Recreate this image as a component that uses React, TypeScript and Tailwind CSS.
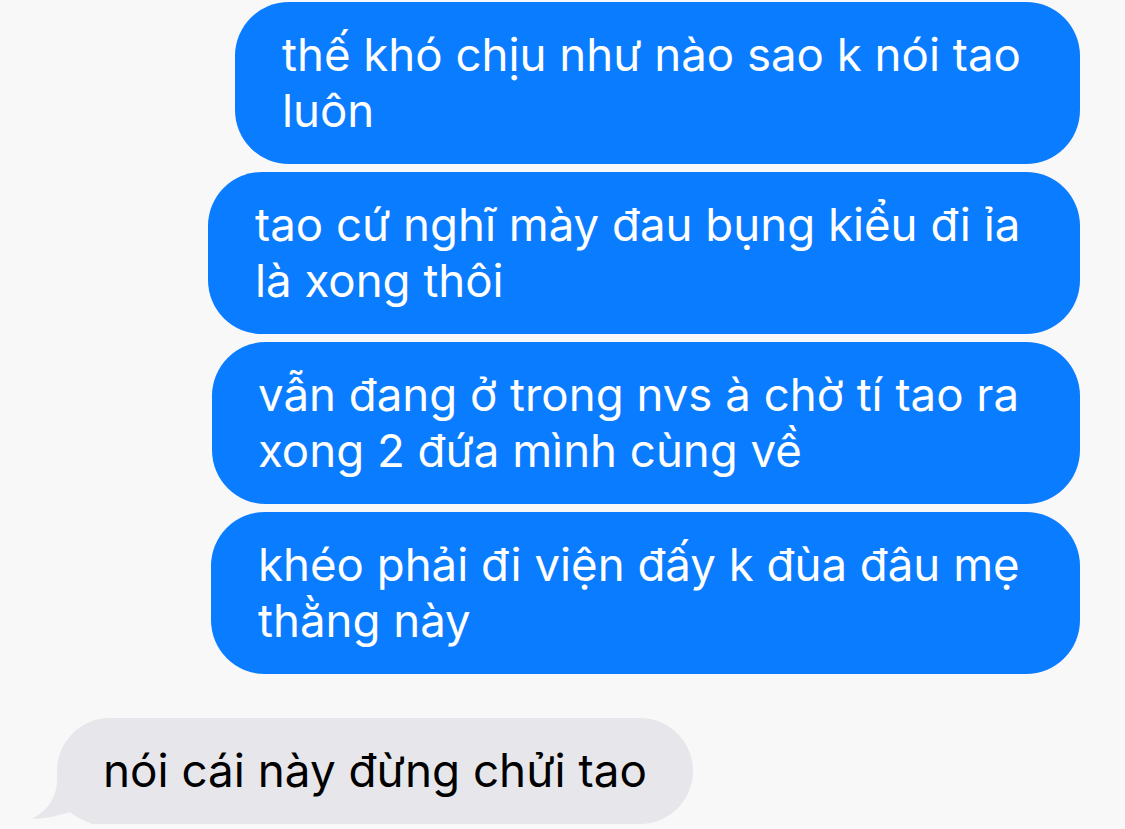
const BLUE = [
  { w: "w-[845px]", px: "pl-[47px]", lines: ["thế khó chịu như nào sao k nói tao", "luôn"] },
  { w: "w-[872px]", px: "pl-[47px]", lines: ["tao cứ nghĩ mày đau bụng kiểu đi ỉa", "là xong thôi"] },
  { w: "w-[868px]", px: "pl-[46px]", lines: ["vẫn đang ở trong nvs à chờ tí tao ra", "xong 2 đứa mình cùng về"] },
  { w: "w-[869px]", px: "pl-[47px]", lines: ["khéo phải đi viện đấy k đùa đâu mẹ", "thằng này"] },
];

function Bubble({ w, px, lines }: { w: string; px: string; lines: string[] }) {
  return (
    <div className={`${w} ${px} h-[162px] rounded-[54px] bg-[#0a7cff] text-white flex flex-col justify-center`}>
      {lines.map((l) => (
        <p key={l} className="whitespace-nowrap text-[45.6px] leading-[56px]">
          {l}
        </p>
      ))}
    </div>
  );
}

export default function App() {
  return (
    <div
      className="w-[1125px] h-[829px] overflow-hidden bg-[#f8f8f8] pt-[2px] pr-[45px]"
      style={{ fontFamily: "Inter, 'Noto Sans', sans-serif" }}
    >
      <div className="flex flex-col items-end gap-[8px]">
        {BLUE.map((b) => (
          <Bubble key={b.lines[0]} {...b} />
        ))}
      </div>
      <div className="relative mt-[44px] ml-[57px] w-[636px] h-[106px]">
        {/* tail */}
        <svg
          className="absolute left-[-25px] top-[37px]"
          width="80"
          height="69"
          viewBox="0 0 80 69"
        >
          <path
            d="M25 20 C26 40 18 54 0 64 C14 64 28 60 38 57 C44 62 52 66 60 69 L80 69 L80 20 Z"
            fill="#e7e7eb"
          />
        </svg>
        <div className="relative h-full rounded-[53px] bg-[#e7e7eb] pl-[46px] flex items-center">
          <p className="whitespace-nowrap text-[45.8px] leading-[56px] text-black">nói cái này đừng chửi tao</p>
        </div>
      </div>
    </div>
  );
}
